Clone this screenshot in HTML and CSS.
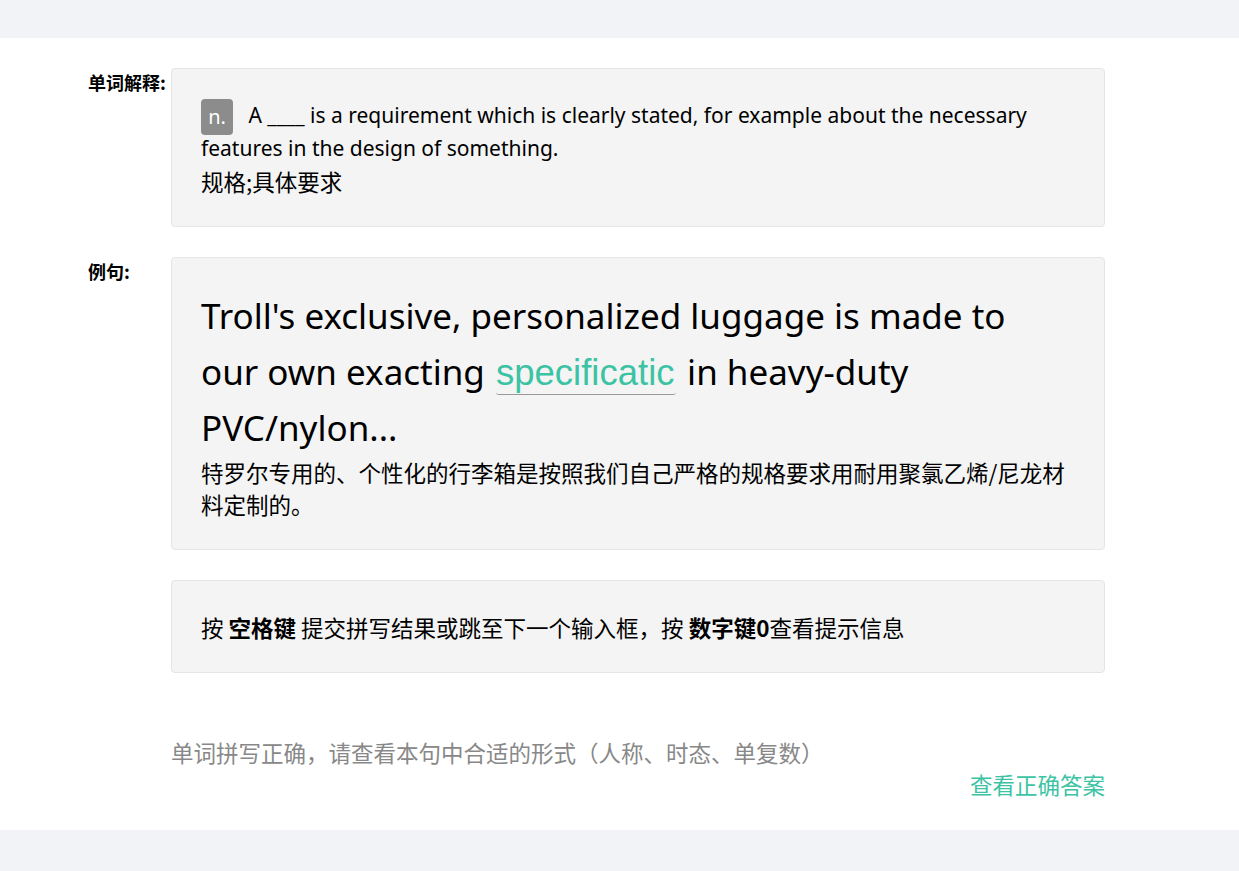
FILE: index.html
```html
<!DOCTYPE html>
<html lang="zh-CN">
<head>
<meta charset="utf-8">
<title>单词拼写</title>
<link rel="stylesheet" href="styles.css">
</head>
<body>
<div class="topbar"></div>
<main class="panel">
  <section class="row">
    <div class="label">单词解释:</div>
    <div class="card card-def">
      <p class="def"><span class="pos">n.</span> A ____ is a requirement which is clearly stated, for example about the necessary features in the design of something.</p>
      <p class="def-cn">规格;具体要求</p>
    </div>
  </section>
  <section class="row">
    <div class="label">例句:</div>
    <div class="card card-ex">
      <p class="sentence">Troll's exclusive, personalized luggage is made to our own exacting <input class="blank" type="text" value="specificatic" readonly> in heavy-duty PVC/nylon...</p>
      <p class="sentence-cn">特罗尔专用的、个性化的行李箱是按照我们自己严格的规格要求用耐用聚氯乙烯/尼龙材料定制的。</p>
    </div>
  </section>
  <section class="row">
    <div class="label"></div>
    <div class="card card-tip">
      <p class="tip">按 <b>空格键</b> 提交拼写结果或跳至下一个输入框，按 <b>数字键0</b>查看提示信息</p>
    </div>
  </section>
  <section class="row row-hint">
    <div class="label"></div>
    <div class="hint-area">
      <p class="hint">单词拼写正确，请查看本句中合适的形式（人称、时态、单复数）</p>
      <a class="answer" href="#">查看正确答案</a>
    </div>
  </section>
</main>
<div class="bottombar"></div>
</body>
</html>
```

FILE: styles.css
```css
html, body {
  margin: 0;
  padding: 0;
}
body {
  background: #f2f3f7;
  font-family: "Noto Sans", "Noto Sans CJK SC", sans-serif;
  color: #000;
}
.topbar {
  height: 38px;
}
.bottombar {
  height: 41px;
}
.panel {
  background: #fff;
  padding: 30px 0 30px 88px;
  height: 732px;
}
.row {
  display: flex;
  width: 1017px;
  margin-bottom: 30px;
}
.label {
  width: 83px;
  flex: none;
  font-size: 18px;
  font-weight: bold;
  line-height: 24px;
  padding-top: 2px;
  font-family: "Noto Sans CJK SC", sans-serif;
}
.card {
  flex: 1;
  background: #f4f4f4;
  border: 1px solid #e5e5e5;
  border-radius: 4px;
  padding: 30px 38px 29px 29px;
}
.card-def {
  padding-bottom: 28px;
}
p {
  margin: 0;
}
.def {
  font-size: 21px;
  line-height: 33px;
}
.def-cn {
  font-size: 22.5px;
  line-height: 33px;
  font-family: "Noto Sans CJK SC", sans-serif;
}
.pos {
  display: inline-block;
  background: #8c8c8c;
  color: #fff;
  border-radius: 4px;
  width: 32px;
  height: 36px;
  line-height: 36px;
  text-align: center;
  font-size: 20px;
  margin: -6px 10px -6px 0;
  vertical-align: middle;
}
.sentence {
  font-size: 35px;
  line-height: 56px;
  margin-right: 14px;
}
.blank {
  font-family: "Liberation Sans", Arial, sans-serif;
  font-size: 36.5px;
  color: #3cc3a4;
  background: transparent;
  border: none;
  border-bottom: 1px solid #999;
  border-radius: 0 0 3px 3px;
  width: 180px;
  padding: 0;
  margin: 0 2px;
  outline: none;
  height: 42px;
  vertical-align: baseline;
}
.sentence-cn {
  font-size: 22.5px;
  line-height: 32px;
  font-family: "Noto Sans CJK SC", sans-serif;
}
.tip {
  font-size: 22.5px;
  line-height: 32px;
  font-family: "Noto Sans CJK SC", sans-serif;
}
.row-hint {
  margin-top: 63px;
}
.hint-area {
  flex: 1;
  display: flex;
  flex-direction: column;
}
.hint {
  font-size: 22.5px;
  line-height: 32px;
  color: #888;
  font-family: "Noto Sans CJK SC", sans-serif;
}
.answer {
  align-self: flex-end;
  font-size: 22.5px;
  line-height: 32px;
  color: #3cc3a4;
  text-decoration: none;
  font-family: "Noto Sans CJK SC", sans-serif;
}
```
